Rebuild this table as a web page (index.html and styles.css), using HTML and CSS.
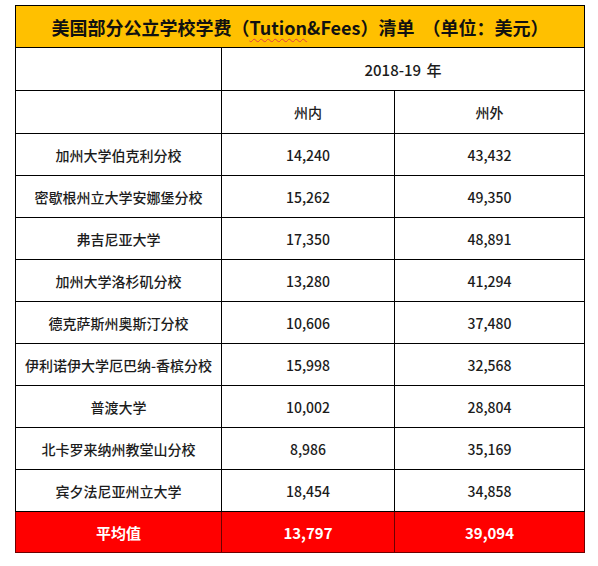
FILE: index.html
```html
<!DOCTYPE html>
<html lang="zh">
<head>
<meta charset="utf-8">
<link rel="stylesheet" href="styles.css">
</head>
<body>
<table class="fees">
  <colgroup>
    <col class="c1"><col class="c2"><col class="c3">
  </colgroup>
  <tr class="title-row">
    <td colspan="3">美国部分公立学校学费（<span class="typo">Tution</span>&amp;Fees）清单 &nbsp;（单位：美元）</td>
  </tr>
  <tr class="head-row">
    <td></td>
    <td colspan="2" class="wide">2018-19 年</td>
  </tr>
  <tr class="head-row">
    <td></td>
    <td>州内</td>
    <td>州外</td>
  </tr>
  <tr><td>加州大学伯克利分校</td><td>14,240</td><td>43,432</td></tr>
  <tr><td>密歇根州立大学安娜堡分校</td><td>15,262</td><td>49,350</td></tr>
  <tr><td>弗吉尼亚大学</td><td>17,350</td><td>48,891</td></tr>
  <tr><td>加州大学洛杉矶分校</td><td>13,280</td><td>41,294</td></tr>
  <tr><td>德克萨斯州奥斯汀分校</td><td>10,606</td><td>37,480</td></tr>
  <tr><td>伊利诺伊大学厄巴纳-香槟分校</td><td>15,998</td><td>32,568</td></tr>
  <tr><td>普渡大学</td><td>10,002</td><td>28,804</td></tr>
  <tr><td>北卡罗来纳州教堂山分校</td><td>8,986</td><td>35,169</td></tr>
  <tr><td>宾夕法尼亚州立大学</td><td>18,454</td><td>34,858</td></tr>
  <tr class="avg-row"><td>平均值</td><td>13,797</td><td>39,094</td></tr>
</table>
</body>
</html>
```
FILE: styles.css
```css
html, body {
  margin: 0;
  padding: 0;
  background: #ffffff;
}
body {
  font-family: "Noto Sans CJK SC", "Noto Sans", sans-serif;
  color: #1c1c1c;
}
.fees {
  margin: 5px 0 0 15px;
  width: 570px;
  border-collapse: collapse;
  table-layout: fixed;
}
.c1 { width: 206px; }
.c2 { width: 173px; }
.c3 { width: 190px; }
.fees td {
  border: 1px solid #000;
  height: 41px;
  padding: 0;
  text-align: center;
  vertical-align: middle;
  font-size: 14px;
  font-weight: 500;
  line-height: 1;
}
.title-row td {
  background: #ffc000;
  font-size: 18px;
  font-weight: 700;
  height: 41px;
  color: #111;
}
.head-row td {
  height: 42px;
}
.head-row .wide {
  font-size: 15px;
  word-spacing: 2px;
}
.typo {
  text-decoration: underline wavy #e04040;
  text-decoration-thickness: 1px;
  text-underline-offset: 3px;
}
.avg-row td {
  background: #ff0000;
  color: #ffffff;
  font-size: 15px;
  font-weight: 700;
  height: 40px;
  border-color: #6e0000;
}
```
